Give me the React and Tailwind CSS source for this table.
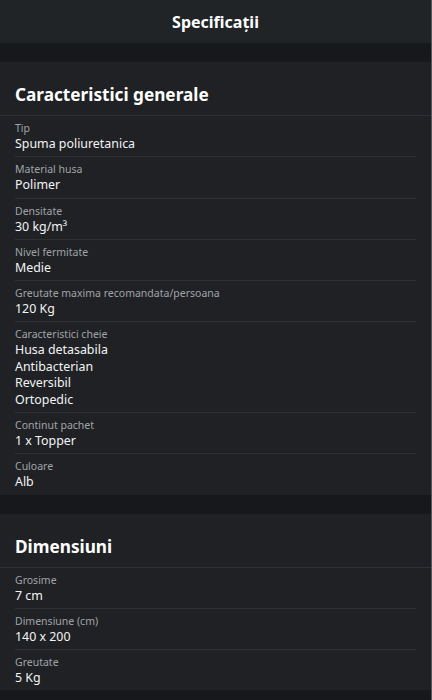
const sections = [
  {
    title: 'Caracteristici generale',
    items: [
      { label: 'Tip', values: ['Spuma poliuretanica'] },
      { label: 'Material husa', values: ['Polimer'] },
      { label: 'Densitate', values: ['30 kg/m³'] },
      { label: 'Nivel fermitate', values: ['Medie'] },
      { label: 'Greutate maxima recomandata/persoana', values: ['120 Kg'] },
      { label: 'Caracteristici cheie', values: ['Husa detasabila', 'Antibacterian', 'Reversibil', 'Ortopedic'] },
      { label: 'Continut pachet', values: ['1 x Topper'] },
      { label: 'Culoare', values: ['Alb'] },
    ],
  },
  {
    title: 'Dimensiuni',
    items: [
      { label: 'Grosime', values: ['7 cm'] },
      { label: 'Dimensiune (cm)', values: ['140 x 200'] },
      { label: 'Greutate', values: ['5 Kg'] },
    ],
  },
];

function SpecRow({ label, values, last }) {
  return (
    <div className={`pt-[5px] pb-[3.75px] ${last ? '' : 'border-b border-[#2d3034]'}`}>
      <div className="text-[10.5px] leading-[15px] text-[#a0a4a8]">{label}</div>
      {values.map((v) => (
        <div key={v} className="text-[12.4px] leading-[16.5px] text-[#f3f4f5]">{v}</div>
      ))}
    </div>
  );
}

export default function App() {
  return (
    <div className="flex min-h-[700px] bg-[#16181b] font-['Noto_Sans',sans-serif]">
      <div className="flex-1">
        <header className="h-[43px] bg-[#212427] flex items-center justify-center">
          <h1 className="text-[16px] font-bold text-white">Specificații</h1>
        </header>

        {sections.map((s) => (
          <section key={s.title} className="mt-[19px] bg-[#1f2124]">
            <h2 className="h-[54px] pt-[19px] px-[15px] text-[17.2px] leading-[28px] font-bold text-white border-b border-[#2d3034]">
              {s.title}
            </h2>
            <div className="pl-[15px] pr-[15px]">
              {s.items.map((it, i) => (
                <SpecRow key={it.label} {...it} last={i === s.items.length - 1} />
              ))}
            </div>
          </section>
        ))}
      </div>
      <div className="w-[1px] bg-[#55585c]" />
    </div>
  );
}
